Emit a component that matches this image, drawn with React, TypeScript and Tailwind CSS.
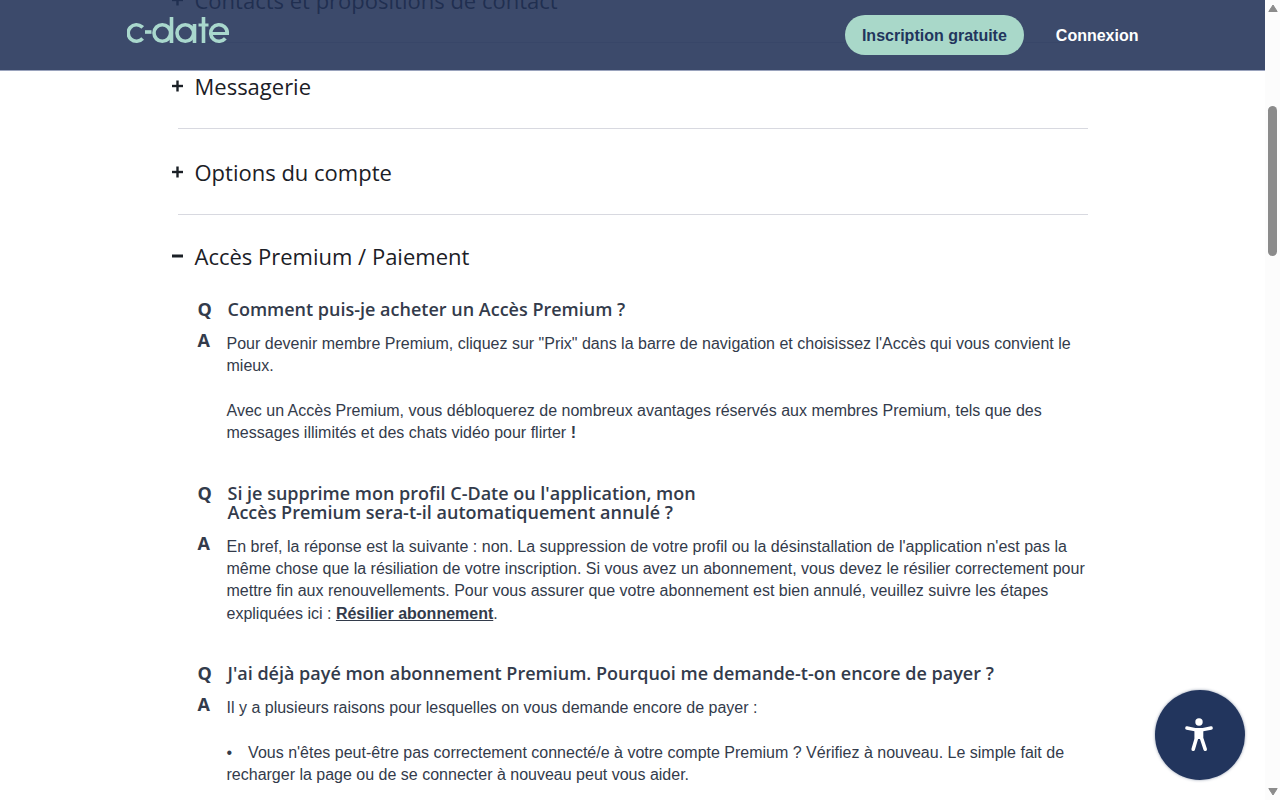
import { useState, type ReactNode } from "react";

function Logo() {
  return (
    <svg
      role="img"
      aria-label="c-date"
      viewBox="0 0 104 28"
      className="h-7 w-[104px]"
      fill="none"
      stroke="#a9d8cd"
      strokeWidth="3.6"
    >
      <circle cx="9.5" cy="17" r="8.3" pathLength="360" strokeDasharray="276 84" transform="rotate(42 9.5 17)" />
      <line x1="18" y1="16" x2="24.5" y2="16" />
      <circle cx="35.3" cy="17" r="8.3" />
      <line x1="44.5" y1="1" x2="44.5" y2="27" />
      <circle cx="58.3" cy="17" r="8.3" />
      <line x1="67.5" y1="8" x2="67.5" y2="27" />
      <line x1="76.5" y1="1" x2="76.5" y2="27" />
      <line x1="71.5" y1="9" x2="81.5" y2="9" strokeWidth="3" />
      <circle cx="92" cy="17" r="8.3" pathLength="360" strokeDasharray="322 38" transform="rotate(40 92 17)" />
      <line x1="84" y1="17.5" x2="102" y2="17.5" strokeWidth="3" />
    </svg>
  );
}

function ToggleIcon({ open }: { open: boolean }) {
  return (
    <svg viewBox="0 0 12 12" className="size-3 shrink-0" fill="none" stroke="#1b2026" strokeWidth="2.4">
      <line x1="0" y1="6" x2="11" y2="6" strokeWidth={open ? 3 : 2.4} />
      {!open && <line x1="5.5" y1="0.5" x2="5.5" y2="11.5" />}
    </svg>
  );
}

function Section({ title, initiallyOpen = false, children }: { title: string; initiallyOpen?: boolean; children?: ReactNode }) {
  const [open, setOpen] = useState(initiallyOpen);
  return (
    <section className={`border-b border-[#d8d9e0] pb-[27px] ${open ? "pt-[26px]" : "pt-7"}`}>
      <h2 className="-ml-1.5 font-['Open_Sans',sans-serif] text-[22px] leading-[30px] text-[#1b2026]">
        <button type="button" aria-expanded={open} onClick={() => setOpen(!open)} className="flex items-center gap-[11px] text-left">
          <ToggleIcon open={open} />
          {title}
        </button>
      </h2>
      {open && children && <div className="mt-[29px] flex flex-col gap-[39px] pl-5">{children}</div>}
    </section>
  );
}

function Entry({ question, children }: { question: ReactNode; children: ReactNode }) {
  return (
    <article className="grid grid-cols-[29px_1fr] gap-y-3 text-[#333b4b]">
      <span className="font-['Open_Sans',sans-serif] text-lg leading-[19px] font-bold">Q</span>
      <h3 className="pl-px font-['Open_Sans',sans-serif] text-lg leading-[19px] font-semibold">{question}</h3>
      <span className="font-['Open_Sans',sans-serif] text-lg leading-[19px] font-bold">A</span>
      <div className="flex flex-col gap-[22px] pt-0.5 text-base leading-[1.4]">{children}</div>
    </article>
  );
}

export default function App() {
  return (
    <div className="flex h-screen overflow-hidden bg-white font-['Liberation_Sans',Arial,sans-serif]">
      <div className="relative min-w-0 flex-1 overflow-hidden">
        <header className="absolute inset-x-0 top-0 z-10 border-b border-[#9aa3bd] bg-[#213157]/88">
          <div className="mx-auto flex h-[70px] w-4/5 items-center justify-between">
            <a href="#accueil" className="-mt-2.5">
              <Logo />
            </a>
            <nav className="flex items-center gap-8 text-base font-bold">
              <a href="#inscription" className="rounded-full bg-[#a9d8c9] px-[17px] pt-[9px] pb-[7px] text-[#22355d]">
                Inscription gratuite
              </a>
              <a href="#connexion" className="pt-[9px] pb-[7px] text-white">
                Connexion
              </a>
            </nav>
          </div>
        </header>

        <main className="mx-auto -mt-[43px] max-w-[910px]">
          <Section title="Contacts et propositions de contact" />
          <Section title="Messagerie" />
          <Section title="Options du compte" />
          <Section title="Accès Premium / Paiement" initiallyOpen>
            <Entry question="Comment puis-je acheter un Accès Premium ?">
              <p>
                Pour devenir membre Premium, cliquez sur "Prix" dans la barre de navigation et choisissez l'Accès qui vous
                convient le mieux.
              </p>
              <p>
                Avec un Accès Premium, vous débloquerez de nombreux avantages réservés aux membres Premium, tels que des
                messages illimités et des chats vidéo pour flirter <strong>!</strong>
              </p>
            </Entry>
            <Entry
              question={
                <>
                  Si je supprime mon profil C-Date ou l'application, mon
                  <br />
                  Accès Premium sera-t-il automatiquement annulé ?
                </>
              }
            >
              <p>
                En bref, la réponse est la suivante : non. La suppression de votre profil ou la désinstallation de
                l'application n'est pas la même chose que la résiliation de votre inscription. Si vous avez un abonnement,
                vous devez le résilier correctement pour mettre fin aux renouvellements. Pour vous assurer que votre
                abonnement est bien annulé, veuillez suivre les étapes expliquées ici :{" "}
                <a href="#resilier" className="font-bold underline">
                  Résilier abonnement
                </a>
                .
              </p>
            </Entry>
            <Entry question="J'ai déjà payé mon abonnement Premium. Pourquoi me demande-t-on encore de payer ?">
              <p>Il y a plusieurs raisons pour lesquelles on vous demande encore de payer :</p>
              <p>
                <span className="mr-4">•</span>Vous n'êtes peut-être pas correctement connecté/e à votre compte Premium ?
                Vérifiez à nouveau. Le simple fait de recharger la page ou de se connecter à nouveau peut vous aider.
              </p>
            </Entry>
          </Section>
        </main>

        <button
          type="button"
          aria-label="Accessibilité"
          className="absolute right-5 bottom-5 flex size-[90px] items-center justify-center rounded-full bg-[#22355d] shadow-[0_0_3px_#22355d80]"
        >
          <svg viewBox="0 0 30 34" className="h-[34px] w-[30px]" fill="none" stroke="#fff" strokeLinecap="round" strokeLinejoin="round">
            <circle cx="14" cy="4" r="3.7" fill="#fff" stroke="none" />
            <path d="M1.9 10 L10 11.6 H18 L26.1 10" strokeWidth="3.4" />
            <path d="M11.5 12 V20 L8.2 31.2 M16.5 12 V20 L20.2 31.2" strokeWidth="3.6" />
            <path d="M10.5 11 H17.5 V20.5 H10.5 Z" fill="#fff" strokeWidth="1" />
          </svg>
        </button>
      </div>

      <div aria-hidden="true" className="flex w-[15px] flex-col items-center bg-[#fcfcfc] py-1">
        <svg viewBox="0 0 10 8" className="h-2 w-2.5" fill="#8b8b8b" stroke="#8b8b8b" strokeLinejoin="round">
          <path d="M5 1 L9.2 7.5 H0.8 Z" />
        </svg>
        <div className="flex w-full flex-1 flex-col items-center pt-[94px]">
          <div className="h-[150px] w-[9px] rounded-full bg-[#8b8b8b]" />
        </div>
        <svg viewBox="0 0 10 8" className="h-2 w-2.5" fill="#8b8b8b" stroke="#8b8b8b" strokeLinejoin="round">
          <path d="M5 7 L9.2 0.5 H0.8 Z" />
        </svg>
      </div>
    </div>
  );
}
